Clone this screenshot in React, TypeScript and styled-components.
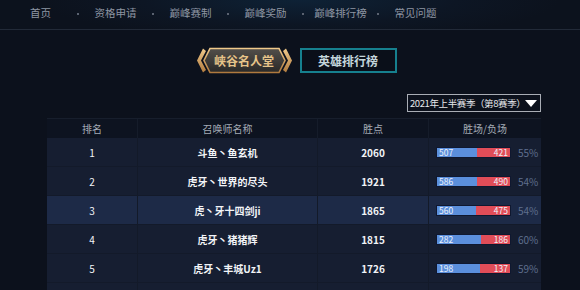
import React from "react";
import styled, { createGlobalStyle } from "styled-components";

const Global = createGlobalStyle`
  html, body { margin: 0; padding: 0; background: #0c111c; overflow: hidden; }
  body { font-family: "Noto Sans CJK SC", "Noto Sans", sans-serif; }
`;

const Page = styled.div`
  width: 580px;
  height: 290px;
  background: #0c111c;
  overflow: hidden;
`;

const Nav = styled.nav`
  height: 29px;
  display: flex;
  align-items: center;
  padding-left: 3px;
  border-bottom: 1px solid #222a38;
  background: radial-gradient(ellipse 260px 40px at 300px 0px, #0e2236 0%, #0d1624 60%, #0c121d 100%);
`;

const NavItem = styled.a<{ $last?: boolean }>`
  position: relative;
  width: 75px;
  text-align: center;
  font-size: 10.5px;
  color: #8e96a3;
  line-height: 14px;
  margin-top: -3px;
  &::after {
    content: ${(p) => (p.$last ? "none" : '""')};
    position: absolute;
    right: -1px;
    top: 7px;
    width: 2px;
    height: 2px;
    background: #5a6270;
  }
`;

const Tabs = styled.div`
  display: flex;
  justify-content: center;
  gap: 7px;
  padding-left: 12px;
  margin-top: 17px;
`;

const GoldTab = styled.div`
  position: relative;
  width: 97px;
  height: 27px;
  display: flex;
  align-items: center;
  justify-content: center;
  font-size: 12px;
  font-weight: 700;
  color: #e6c48a;
  svg { position: absolute; inset: 0; }
  span { position: relative; }
`;

const TealTab = styled.div`
  box-sizing: border-box;
  width: 97px;
  height: 25px;
  margin-top: 1px;
  border: 2px solid #16808e;
  background: #0a0f19;
  display: flex;
  align-items: center;
  justify-content: center;
  font-size: 12px;
  font-weight: 700;
  color: #c4d6dc;
`;

const SelectRow = styled.div`
  display: flex;
  justify-content: flex-end;
  padding-right: 39px;
  margin-top: 20px;
`;

const Select = styled.div`
  box-sizing: border-box;
  width: 134px;
  height: 18px;
  border: 1px solid #a9adb5;
  display: flex;
  align-items: center;
  justify-content: space-between;
  padding: 0 4px 0 2px;
  font-size: 9.5px;
  letter-spacing: -0.4px;
  color: #e4e6ea;
  white-space: nowrap;
  overflow: hidden;
`;

const Caret = styled.span`
  flex-shrink: 0;
  width: 0;
  height: 0;
  border-left: 6px solid transparent;
  border-right: 6px solid transparent;
  border-top: 7px solid #ffffff;
`;

const Table = styled.div`
  margin: 6px 0 0 47px;
  width: 494px;
`;

const cols = "90px 180px 111px 113px";

const HeadRow = styled.div`
  display: grid;
  grid-template-columns: ${cols};
  height: 20px;
  background: #0d1320;
  border-top: 1px solid #171e2c;
  box-sizing: border-box;
`;

const HeadCell = styled.div`
  display: flex;
  align-items: center;
  justify-content: center;
  font-size: 10px;
  color: #a4abb6;
  border-left: 1px solid #151c2a;
  &:first-child { border-left: none; }
`;

const Row = styled.div<{ $hl?: boolean }>`
  display: grid;
  grid-template-columns: ${cols};
  height: 29px;
  background: ${(p) => (p.$hl ? "#1d2a47" : "#161e31")};
  border-bottom: 1px solid #131a2a;
  box-sizing: border-box;
`;

const Cell = styled.div`
  display: flex;
  align-items: center;
  justify-content: center;
  font-size: 10px;
  font-weight: 700;
  color: #f2f4f7;
  border-left: 1px solid #131a29;
  &:first-child { border-left: none; font-weight: 400; }
`;

const BarCell = styled.div`
  display: flex;
  align-items: center;
  padding-left: 8px;
  border-left: 1px solid #131a29;
`;

const Bar = styled.div`
  width: 73px;
  height: 9px;
  display: flex;
  box-shadow: 0 0 0 1px #0f1830;
  font-size: 8.5px;
  line-height: 9px;
  color: #eef2fa;
`;

const Win = styled.div`
  background: #5b8fdc;
  padding-left: 2px;
`;

const Lose = styled.div`
  flex: 1;
  background: #e14d58;
  text-align: right;
  padding-right: 2px;
`;

const Pct = styled.span`
  margin-left: 8px;
  font-size: 10px;
  color: #5f6f8e;
`;

const navItems = ["首页", "资格申请", "巅峰赛制", "巅峰奖励", "巅峰排行榜", "常见问题"];

type R = { rank?: number; name?: string; pts?: number; w?: number; l?: number; p?: string; hl?: boolean };

const rows: R[] = [
  { rank: 1, name: "斗鱼丶鱼玄机", pts: 2060, w: 507, l: 421, p: "55%" },
  { rank: 2, name: "虎牙丶世界的尽头", pts: 1921, w: 586, l: 490, p: "54%" },
  { rank: 3, name: "虎丶牙十四剑ji", pts: 1865, w: 560, l: 475, p: "54%", hl: true },
  { rank: 4, name: "虎牙丶猪猪辉", pts: 1815, w: 282, l: 186, p: "60%" },
  { rank: 5, name: "虎牙丶丰城Uz1", pts: 1726, w: 198, l: 137, p: "59%" },
  {},
];

export default function App() {
  return (
    <Page>
      <Global />
      <Nav>
        {navItems.map((t, i) => (
          <NavItem key={t} $last={i === navItems.length - 1}>{t}</NavItem>
        ))}
      </Nav>
      <Tabs>
        <GoldTab>
          <svg width="97" height="27" viewBox="0 0 97 27">
            <defs>
              <linearGradient id="gf" x1="0" y1="0" x2="0" y2="1">
                <stop offset="0" stopColor="#524f4a" />
                <stop offset="1" stopColor="#2a2928" />
              </linearGradient>
              <linearGradient id="gs" x1="0" y1="0" x2="0" y2="1">
                <stop offset="0" stopColor="#f0c98a" />
                <stop offset="1" stopColor="#b07a3e" />
              </linearGradient>
            </defs>
            <polygon points="14,1.5 83,1.5 89,13.5 83,25.5 14,25.5 8,13.5" fill="url(#gf)" stroke="url(#gs)" strokeWidth="1.6" />
            <polygon points="7,1.5 1,13.5 7,25.5 10,23 5,13.5 10,4" fill="url(#gs)" />
            <polygon points="90,1.5 96,13.5 90,25.5 87,23 92,13.5 87,4" fill="url(#gs)" />
          </svg>
          <span>峡谷名人堂</span>
        </GoldTab>
        <TealTab>英雄排行榜</TealTab>
      </Tabs>
      <SelectRow>
        <Select>
          <span>2021年上半赛季（第8赛季）</span>
          <Caret />
        </Select>
      </SelectRow>
      <Table>
        <HeadRow>
          <HeadCell>排名</HeadCell>
          <HeadCell>召唤师名称</HeadCell>
          <HeadCell>胜点</HeadCell>
          <HeadCell>胜场/负场</HeadCell>
        </HeadRow>
        {rows.map((r, i) => (
          <Row key={i} $hl={r.hl}>
            <Cell>{r.rank}</Cell>
            <Cell>{r.name}</Cell>
            <Cell>{r.pts}</Cell>
            <BarCell>
              {r.w !== undefined && r.l !== undefined && (
                <>
                  <Bar>
                    <Win style={{ width: `${(r.w / (r.w + r.l)) * 73 - 2}px` }}>{r.w}</Win>
                    <Lose>{r.l}</Lose>
                  </Bar>
                  <Pct>{r.p}</Pct>
                </>
              )}
            </BarCell>
          </Row>
        ))}
      </Table>
    </Page>
  );
}
